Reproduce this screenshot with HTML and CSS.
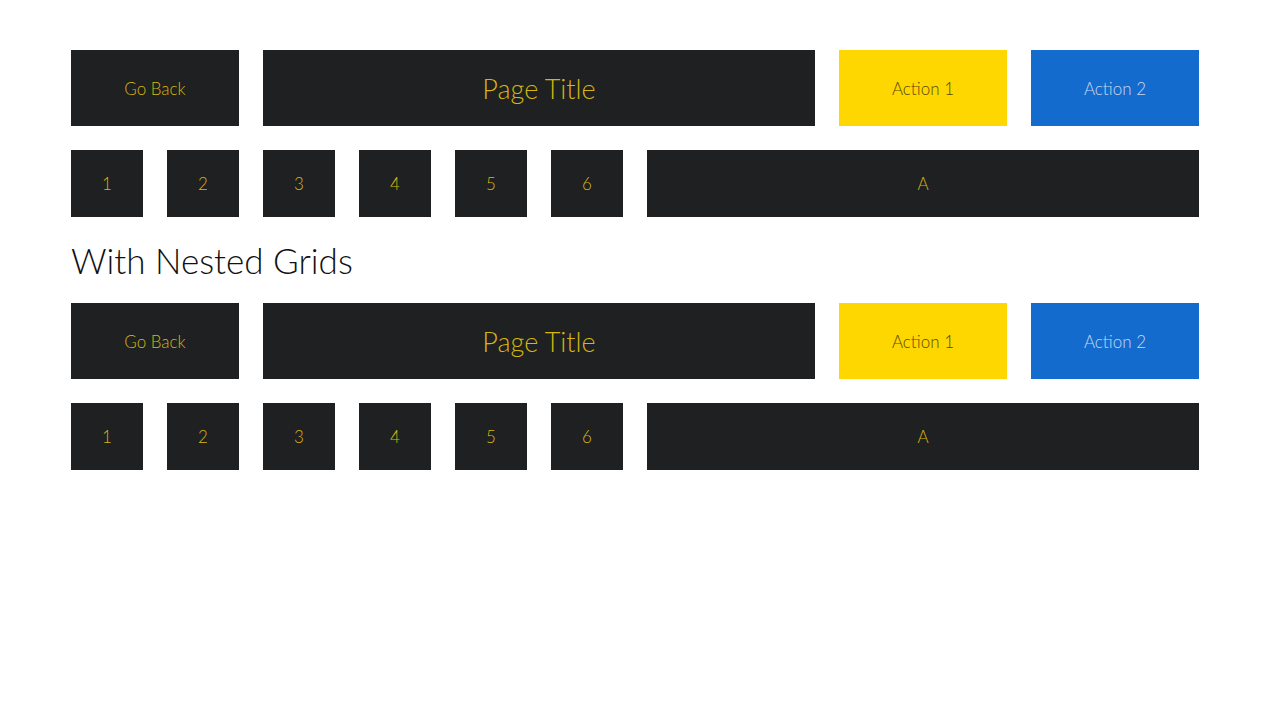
FILE: index.html
```html
<!DOCTYPE html>
<html>
<head>
<meta charset="utf-8">
<link rel="stylesheet" href="styles.css">
</head>
<body>
<div class="page">
  <div class="grid header">
    <div class="cell span2">Go Back</div>
    <div class="cell span6 title">Page Title</div>
    <div class="cell span2 yellow">Action 1</div>
    <div class="cell span2 blue">Action 2</div>
  </div>
  <div class="grid tiles">
    <div class="cell">1</div>
    <div class="cell">2</div>
    <div class="cell">3</div>
    <div class="cell">4</div>
    <div class="cell">5</div>
    <div class="cell">6</div>
    <div class="cell span6">A</div>
  </div>
  <h2 class="heading">With Nested Grids</h2>
  <div class="grid header">
    <div class="cell span2">Go Back</div>
    <div class="cell span6 title">Page Title</div>
    <div class="nested span4">
      <div class="cell yellow">Action 1</div>
      <div class="cell blue">Action 2</div>
    </div>
  </div>
  <div class="grid tiles">
    <div class="nested6 span6">
      <div class="cell">1</div>
      <div class="cell">2</div>
      <div class="cell">3</div>
      <div class="cell">4</div>
      <div class="cell">5</div>
      <div class="cell">6</div>
    </div>
    <div class="cell span6">A</div>
  </div>
</div>
</body>
</html>
```
FILE: styles.css
```css
html, body {
  margin: 0;
  padding: 0;
  background: #ffffff;
}
body {
  font-family: Lato, "Open Sans", sans-serif;
  font-weight: 300;
}
.page {
  width: 1128px;
  margin: 0 auto;
  padding-top: 50px;
}
.grid {
  display: grid;
  grid-template-columns: repeat(12, 72px);
  column-gap: 24px;
  margin-bottom: 24px;
}
.header {
  height: 76px;
}
.tiles {
  height: 67px;
}
.cell {
  background: #1f2022;
  color: #d6b60c;
  display: flex;
  align-items: center;
  justify-content: center;
  font-size: 17px;
}
.span2 { grid-column: span 2; }
.span4 { grid-column: span 4; }
.span6 { grid-column: span 6; }
.title {
  font-size: 27px;
}
.yellow {
  background: #ffd700;
  color: #5a4a00;
}
.blue {
  background: #146bce;
  color: #c7d8ef;
}
.nested {
  display: grid;
  grid-template-columns: 1fr 1fr;
  column-gap: 24px;
}
.nested6 {
  display: grid;
  grid-template-columns: repeat(6, 1fr);
  column-gap: 24px;
}
.heading {
  margin: 0 0 24px 0;
  height: 38px;
  display: flex;
  align-items: center;
  font-size: 35px;
  font-weight: 300;
  color: #111;
}
```
